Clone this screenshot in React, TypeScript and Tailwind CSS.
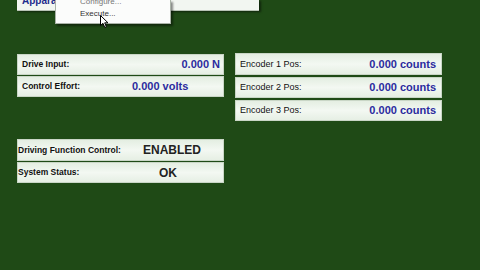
import React from 'react';

interface FieldProps {
    readonly label: string;
    readonly value: string;
    readonly labelClass?: string;
    readonly valueClass?: string;
    readonly rowClass?: string;
}

// one readout box: label on the left, value after it
function Field({ label, value, labelClass = '', valueClass = '', rowClass = '' }: FieldProps): React.ReactElement {
    return (
        <div
            className={`flex items-center h-[21px] border border-[#c9d6c6] bg-gradient-to-b from-[#e4eee2] via-[#f3f8f2] to-[#e6efe4] ${rowClass}`}
        >
            <span className={`shrink-0 leading-none text-[#111] ${labelClass}`}>{label}</span>
            <span className={`text-[11px] leading-none font-bold ${valueClass}`}>{value}</span>
        </div>
    );
}

function Cursor(): React.ReactElement {
    return (
        <svg width="9" height="14" viewBox="0 0 9 14" className="absolute left-[100px] top-[15px]">
            <path d="M0.5 0.5 L0.5 10.5 L3 8.3 L4.8 12.5 L6.4 11.8 L4.7 7.8 L8 7.8 Z" fill="#fff" stroke="#000" strokeWidth="1" />
        </svg>
    );
}

export default function App(): React.ReactElement {
    return (
        <div
            className="relative w-[480px] h-[270px] overflow-hidden bg-[#1f4a16]"
            style={{ fontFamily: '"Liberation Sans", Arial, sans-serif' }}
        >
            {/* menu bar, scrolled partly off the top */}
            <div className="ml-[17px] w-[242px] h-[11px] bg-[#f2f6f1] border-b border-[#b8c4b5] overflow-hidden shadow-[2px_1px_2px_rgba(0,0,0,0.5)]">
                <span className="block pl-[5px] -mt-[4px] text-[10px] font-bold text-[#1d2c8c] leading-none">Apparatus</span>
            </div>

            {/* open dropdown */}
            <div className="absolute left-[55px] top-0 w-[116px] h-[24px] bg-[#fbfcfb] border border-[#a9b2a7] border-t-0 shadow-[2px_2px_2px_rgba(0,0,0,0.45)] overflow-hidden">
                <div className="pl-[24px] -mt-[4px] text-[8px] leading-[12px] text-[#777]">Configure...</div>
                <div className="pl-[24px] text-[8px] leading-[12px] text-[#333]">Execute...</div>
            </div>
            <Cursor />

            <div className="flex gap-[11px] pl-[17px] pt-[43px]">
                <div className="flex flex-col w-[207px]">
                    <div className="flex flex-col gap-[1px]">
                        <Field
                            label="Drive Input:"
                            value="0.000 N"
                            rowClass="pl-[4px] pr-[3px]"
                            labelClass="text-[8.5px] font-bold"
                            valueClass="ml-auto text-[#2b2b9e]"
                        />
                        <Field
                            label="Control Effort:"
                            value="0.000 volts"
                            rowClass="pl-[4px]"
                            labelClass="text-[8.5px] font-bold w-[110px]"
                            valueClass="text-[#2b2b9e]"
                        />
                    </div>
                    <div className="flex flex-col gap-[1px] mt-[42px]">
                        <Field
                            label="Driving Function Control:"
                            value="ENABLED"
                            rowClass="pl-0 h-[22px]"
                            labelClass="text-[8.5px] font-bold w-[125px]"
                            valueClass="text-[12px] text-[#222]"
                        />
                        <Field
                            label="System Status:"
                            value="OK"
                            rowClass="pl-0"
                            labelClass="text-[8.5px] font-bold w-[141px]"
                            valueClass="text-[12px] text-[#222]"
                        />
                    </div>
                </div>

                <div className="flex flex-col gap-[2px] w-[207px] -mt-[1px]">
                    <Field
                        label="Encoder 1 Pos:"
                        value="0.000 counts"
                        rowClass="pl-[4px] pr-[5px] h-[22px]"
                        labelClass="text-[9px]"
                        valueClass="ml-auto text-[#2b2b9e]"
                    />
                    <Field
                        label="Encoder 2 Pos:"
                        value="0.000 counts"
                        rowClass="pl-[4px] pr-[5px] h-[20px]"
                        labelClass="text-[9px]"
                        valueClass="ml-auto text-[#2b2b9e]"
                    />
                    <Field
                        label="Encoder 3 Pos:"
                        value="0.000 counts"
                        rowClass="pl-[4px] pr-[5px]"
                        labelClass="text-[9px]"
                        valueClass="ml-auto text-[#2b2b9e]"
                    />
                </div>
            </div>
        </div>
    );
}
